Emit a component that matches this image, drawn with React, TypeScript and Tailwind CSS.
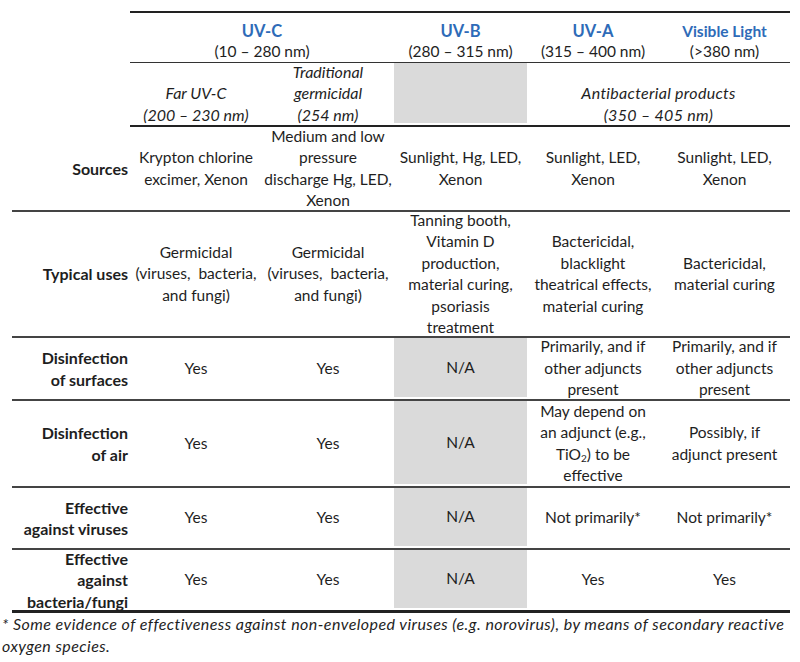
import React from 'react';

type Cell = { text: React.ReactNode; gray?: boolean };

type BodyRow = { label: React.ReactNode; h: string; cells: Cell[] };

const widths = ['w-[132px]', 'w-[132px]', 'w-[133px]', 'w-[132px]', 'w-[131px]'];

const rows: BodyRow[] = [
  {
    label: 'Sources',
    h: 'h-[83px]',
    cells: [
      { text: <>Krypton chlorine<br />excimer, Xenon</> },
      { text: <>Medium and low<br />pressure<br />discharge Hg, LED,<br />Xenon</> },
      { text: <>Sunlight, Hg, LED,<br />Xenon</> },
      { text: <>Sunlight, LED,<br />Xenon</> },
      { text: <>Sunlight, LED,<br />Xenon</> },
    ],
  },
  {
    label: 'Typical uses',
    h: 'h-[124px]',
    cells: [
      { text: <>Germicidal<br />(viruses,&nbsp; bacteria,<br />and fungi)</> },
      { text: <>Germicidal<br />(viruses,&nbsp; bacteria,<br />and fungi)</> },
      { text: <>Tanning booth,<br />Vitamin D<br />production,<br />material curing,<br />psoriasis<br />treatment</> },
      { text: <>Bactericidal,<br />blacklight<br />theatrical effects,<br />material curing</> },
      { text: <>Bactericidal,<br />material curing</> },
    ],
  },
  {
    label: <>Disinfection<br />of surfaces</>,
    h: 'h-[61px]',
    cells: [
      { text: 'Yes' },
      { text: 'Yes' },
      { text: 'N/A', gray: true },
      { text: <>Primarily, and if<br />other adjuncts<br />present</> },
      { text: <>Primarily, and if<br />other adjuncts<br />present</> },
    ],
  },
  {
    label: <>Disinfection<br />of air</>,
    h: 'h-[85px]',
    cells: [
      { text: 'Yes' },
      { text: 'Yes' },
      { text: 'N/A', gray: true },
      { text: <>May depend on<br />an adjunct (e.g.,<br />TiO<sub className="text-[10px]">2</sub>) to be<br />effective</> },
      { text: <>Possibly, if<br />adjunct present</> },
    ],
  },
  {
    label: <>Effective<br />against viruses</>,
    h: 'h-[60px]',
    cells: [
      { text: 'Yes' },
      { text: 'Yes' },
      { text: 'N/A', gray: true },
      { text: 'Not primarily*' },
      { text: 'Not primarily*' },
    ],
  },
  {
    label: <>Effective<br />against<br />bacteria/fungi</>,
    h: 'h-[60px]',
    cells: [
      { text: 'Yes' },
      { text: 'Yes' },
      { text: 'N/A', gray: true },
      { text: 'Yes' },
      { text: 'Yes' },
    ],
  },
];

const Thin = () => <div className="h-[2px] bg-[#444]" />;

export default function App() {
  return (
    <div className="w-[800px] h-[662px] bg-white pt-[11px] font-['Lato',sans-serif] text-[15.5px] leading-[21.5px] text-[#1e1e1e] overflow-hidden">
      {/* header */}
      <div className="ml-[130px] w-[660px]">
        <div className="h-[2px] bg-[#222]" />
        <div className="flex h-[49px] items-end text-center">
          <div className="w-[264px]">
            <div className="text-[16.5px] leading-[20px] font-bold text-[#2e6bb8]">UV-C</div>
            <div>(10 – 280 nm)</div>
          </div>
          <div className="w-[133px]">
            <div className="text-[16.5px] leading-[20px] font-bold text-[#2e6bb8]">UV-B</div>
            <div>(280 – 315 nm)</div>
          </div>
          <div className="w-[132px]">
            <div className="text-[16.5px] leading-[20px] font-bold text-[#2e6bb8]">UV-A</div>
            <div>(315 – 400 nm)</div>
          </div>
          <div className="w-[131px]">
            <div className="text-[15.5px] leading-[20px] font-bold text-[#2e6bb8]">Visible Light</div>
            <div>(&gt;380 nm)</div>
          </div>
        </div>
        <div className="h-px bg-[#333]" />
        <div className="flex h-[62px] items-end text-center italic text-[16px] whitespace-nowrap">
          <div className="w-[132px]">Far UV-C<br />(200 – 230 nm)</div>
          <div className="w-[132px]">Traditional<br />germicidal<br />(254 nm)</div>
          <div className="w-[133px] self-stretch mb-[2px] bg-[#dadada]" />
          <div className="w-[263px] tracking-[0.3px]">Antibacterial products<br />(350 – 405 nm)</div>
        </div>
        <div className="h-[2px] bg-[#222]" />
      </div>

      {/* body */}
      <div className="ml-[12px] w-[778px]">
        {rows.map((row, i) => (
          <div key={i}>
            <div className={`flex ${row.h} whitespace-nowrap`}>
              <div className="w-[118px] pr-[2px] flex items-center justify-end text-right font-bold text-[16px]">
                <div>{row.label}</div>
              </div>
              {row.cells.map((c, j) => (
                <div
                  key={j}
                  className={`${widths[j]} flex items-center justify-center text-center ${c.gray ? 'bg-[#dadada] mb-[2px]' : ''}`}
                >
                  <div>{c.text}</div>
                </div>
              ))}
            </div>
            {i < rows.length - 1 ? <Thin /> : <div className="h-[3px] bg-[#222]" />}
          </div>
        ))}
      </div>

      {/* footnote */}
      <div className="pl-[2px] italic text-[16px] tracking-[0.45px] whitespace-nowrap">
        * Some evidence of effectiveness against non-enveloped viruses (e.g. norovirus), by means of secondary reactive
        <br />
        oxygen species.
      </div>
    </div>
  );
}
